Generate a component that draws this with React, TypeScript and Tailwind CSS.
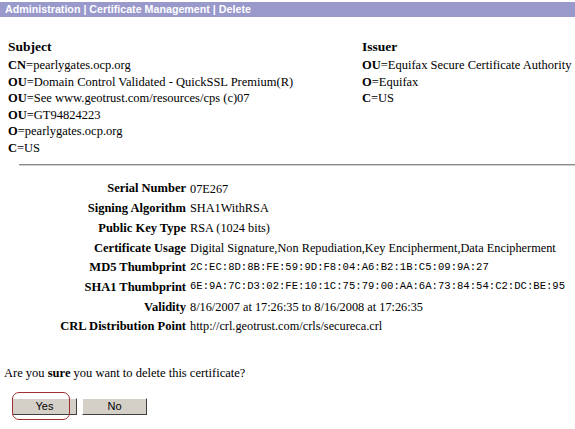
import React from "react";

const serif = { fontFamily: '"Liberation Serif", "Times New Roman", serif' };
const sans = { fontFamily: '"Liberation Sans", Arial, sans-serif' };

function Line({ k, v }: { k: string; v: string }) {
  return (
    <div className="h-[16.5px] leading-[16.5px] whitespace-nowrap">
      <span className="font-bold">{k}</span>={v}
    </div>
  );
}

function Row({ label, value, mono }: { label: string; value: string; mono?: boolean }) {
  return (
    <div className="flex h-[19.7px] items-center whitespace-nowrap">
      <div className="w-[186px] shrink-0 text-right font-bold text-[12.5px]">{label}</div>
      <div
        className={mono ? "pl-[4px] text-[10.6px]" : "pl-[4px] text-[12.3px]"}
        style={mono ? { fontFamily: '"Liberation Mono", "Courier New", monospace' } : undefined}
      >
        {value}
      </div>
    </div>
  );
}

export default function App() {
  return (
    <div className="w-[575px] h-[429px] bg-white text-black overflow-hidden" style={serif}>
      <div className="pt-[2px]">
        <div
          className="h-[15px] bg-[#9999cc] text-white font-bold text-[10.7px] leading-[15px] pl-[5px] whitespace-nowrap"
          style={sans}
        >
          Administration | Certificate Management | Delete
        </div>
      </div>

      <div className="flex pt-[20px] text-[12.5px]">
        <div className="w-[354px] pl-[8px] shrink-0">
          <div className="font-bold text-[13.5px] h-[20px] leading-[20px]">Subject</div>
          <Line k="CN" v="pearlygates.ocp.org" />
          <Line k="OU" v="Domain Control Validated - QuickSSL Premium(R)" />
          <Line k="OU" v="See www.geotrust.com/resources/cps (c)07" />
          <Line k="OU" v="GT94824223" />
          <Line k="O" v="pearlygates.ocp.org" />
          <Line k="C" v="US" />
        </div>
        <div className="pl-[8px]">
          <div className="font-bold text-[13.5px] h-[20px] leading-[20px]">Issuer</div>
          <Line k="OU" v="Equifax Secure Certificate Authority" />
          <Line k="O" v="Equifax" />
          <Line k="C" v="US" />
        </div>
      </div>

      <div className="pl-[19px] pt-[8px]">
        <div className="h-[2px] bg-[#8a8a8a] border-b border-[#d0d0d0]" />
      </div>

      <div className="pt-[13px]">
        <Row label="Serial Number" value="07E267" />
        <Row label="Signing Algorithm" value="SHA1WithRSA" />
        <Row label="Public Key Type" value="RSA (1024 bits)" />
        <Row label="Certificate Usage" value="Digital Signature,Non Repudiation,Key Encipherment,Data Encipherment" />
        <Row label="MD5 Thumbprint" value="2C:EC:8D:8B:FE:59:9D:F8:04:A6:B2:1B:C5:09:9A:27" mono />
        <Row label="SHA1 Thumbprint" value="6E:9A:7C:D3:02:FE:10:1C:75:79:00:AA:6A:73:84:54:C2:DC:BE:95" mono />
        <Row label="Validity" value="8/16/2007 at 17:26:35 to 8/16/2008 at 17:26:35" />
        <Row label="CRL Distribution Point" value="http://crl.geotrust.com/crls/secureca.crl" />
      </div>

      <div className="mt-[28px] pl-[4px] text-[12.5px] h-[16px] leading-[16px] whitespace-nowrap">
        Are you <span className="font-bold">sure</span> you want to delete this certificate?
      </div>

      <div className="flex gap-[5px] pl-[12px] mt-[17px] relative">
        <button
          className="w-[65px] h-[17px] bg-[#d4d0c8] text-[11px] leading-[13px] border border-t-white border-l-white border-r-[#404040] border-b-[#404040]"
          style={sans}
        >
          Yes
        </button>
        <button
          className="w-[65px] h-[17px] bg-[#d4d0c8] text-[11px] leading-[13px] border border-t-white border-l-white border-r-[#404040] border-b-[#404040]"
          style={sans}
        >
          No
        </button>
        <div className="absolute left-[12px] top-[-6px] w-[58px] h-[28px] rounded-[7px] border border-[#a03030]" />
      </div>
    </div>
  );
}
